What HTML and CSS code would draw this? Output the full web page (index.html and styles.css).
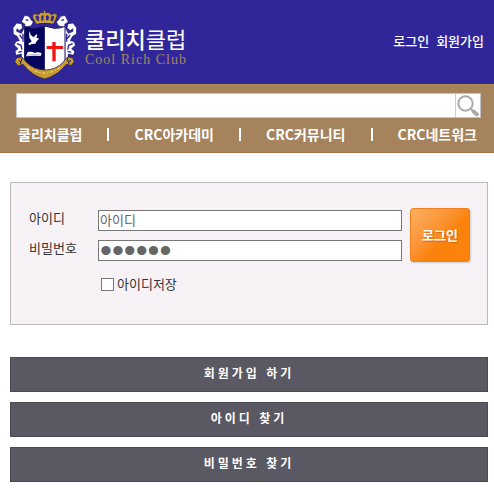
FILE: index.html
```html
<!DOCTYPE html>
<html lang="ko">
<head>
    <meta charset="UTF-8">
    <meta name="viewport" content="width=device-width, initial-scale=1.0">
    <title>쿨리치클럽</title>
    <link rel="stylesheet" href="styles.css">
</head>
<body>
    <header class="header">
        <a class="logo" href="#">
            <svg class="emblem" viewBox="24 18 192 222" aria-hidden="true">
                <!-- lions -->
                <g id="lion">
                    <path fill="#fff" stroke="#17175f" stroke-width="2" d="M58 38 Q73 36 78 50 L85 57 L78 69 L66 71 L60 92 L60 170 L50 172 L49 153 L33 157 L30 145 L39 137 L27 126 L33 115 L43 113 L36 100 L25 94 L24 74 L35 60 L50 62 L53 75 L43 83 L36 77 L35 85 L49 91 L56 78 L60 64 L49 57 Z"/>
                    <path fill="none" stroke="#30269a" stroke-width="4" d="M62 50 L70 52 M44 96 L52 107 M36 122 L48 127 L51 140 M54 92 L54 116 M40 148 L51 145"/>
                </g>
                <use href="#lion" transform="matrix(-1 0 0 1 239 0)"/>
                <!-- shield -->
                <path fill="#fff" d="M119 69 L148 76 Q165 76 180 70 L180 170 Q176 201 119 218 Z"/>
                <path fill="#05055c" d="M119 69 L92 76 Q75 76 59 70 L59 170 Q64 201 119 218 Z"/>
                <path fill="none" stroke="#17175f" stroke-width="3" d="M59 70 Q75 78 92 76 L119 69 L148 76 Q165 77 180 70 L180 170 Q176 201 119 218 Q64 201 59 170 Z"/>
                <path fill="#f51313" d="M142 117 H152 V129 H174 V138 H152 V175 H142 V138 H125 V129 H142 Z"/>
                <path fill="#fff" d="M72 84 L78 97 L86 103 L94 94 L97 96 L94 104 L103 107 L96 113 L91 122 L80 123 L73 127 L70 122 L80 115 L73 104 Z"/>
                <path fill="#fff" d="M68 147 Q82 144 89 150 Q99 145 110 151 L107 159 L88 158 L63 160 Z"/>
                <path fill="none" stroke="#999abf" stroke-width="2" d="M64 157 L88 154 L107 156"/>
                <!-- crown -->
                <path fill="#c79a2b" stroke="#17175f" stroke-width="2" d="M93 63 L83 44 Q80 32 93 32 L100 35 Q106 25 115 29 L115 22 H122 V29 Q133 24 139 35 Q154 27 157 39 L146 63 Q119 57 93 63 Z"/>
                <path fill="#30269a" d="M91 41 Q96 34 102 42 L102 53 L97 54 Z M109 40 Q114 33 116 40 L115 52 L109 53 Z M123 39 Q129 34 132 42 L130 52 L123 52 Z M138 42 Q146 34 148 43 L143 55 L137 53 Z"/>
                <path fill="none" stroke="#f5d982" stroke-width="3" stroke-dasharray="4 4" d="M96 61 Q119 54 143 61"/>
                <!-- ribbon -->
                <path fill="#c79a2b" stroke="#17175f" stroke-width="2" d="M35 164 L51 162 L63 176 Q84 199 119 201 Q154 200 174 178 L187 162 L203 164 L208 176 L198 188 L184 184 Q160 217 119 228 Q79 218 54 184 L39 189 L29 176 Z"/>
                <path fill="none" stroke="#f0dc98" stroke-width="3" stroke-dasharray="10 5 4 5" d="M68 190 Q117 230 169 191"/>
                <path fill="none" stroke="#17175f" stroke-width="3" d="M42 172 L48 178 M52 164 L45 184 M190 177 L198 172 M186 165 L193 185"/>
            </svg>
            <span class="logo-text">
                <span class="logo-name"><strong>쿨리치</strong>클럽</span>
                <span class="logo-sub">Cool Rich Club</span>
            </span>
        </a>
        <div class="user-menu">
            <a href="#">로그인</a>
            <a href="#">회원가입</a>
        </div>
    </header>

    <div class="topbar">
        <form class="search">
            <input class="search-input" type="text" aria-label="검색">
            <button class="search-btn" type="submit" aria-label="검색">
                <svg viewBox="0 0 24 24" width="24" height="24" aria-hidden="true">
                    <circle cx="9.5" cy="9.5" r="7.2" fill="none" stroke="#aaa" stroke-width="2"/>
                    <path d="M14.5 14.5 L17 17" stroke="#aaa" stroke-width="2"/>
                    <path d="M17.5 17.5 L21 20.5" stroke="#aaa" stroke-width="4" stroke-linecap="round"/>
                </svg>
            </button>
        </form>
        <nav class="nav">
            <a href="#">쿨리치클럽</a>
            <span class="divider"></span>
            <a href="#">CRC아카데미</a>
            <span class="divider"></span>
            <a href="#">CRC커뮤니티</a>
            <span class="divider"></span>
            <a href="#">CRC네트워크</a>
        </nav>
    </div>

    <main class="content">
        <form class="login-box">
            <div class="fields">
                <label for="userId">아이디</label>
                <input class="field" type="text" id="userId" placeholder="아이디">
                <label for="userPw">비밀번호</label>
                <input class="field password" type="password" id="userPw" value="123456">
                <div class="save-id">
                    <input type="checkbox" id="saveId">
                    <label for="saveId">아이디저장</label>
                </div>
            </div>
            <button class="login-btn" type="submit">로그인</button>
        </form>

        <div class="links">
            <button class="link-btn" type="button">회원가입 하기</button>
            <button class="link-btn" type="button">아이디 찾기</button>
            <button class="link-btn" type="button">비밀번호 찾기</button>
        </div>
    </main>
</body>
</html>
```
FILE: styles.css
```css
* {
    box-sizing: border-box;
}
body {
    margin: 0;
    background: #fff;
    color: #333;
    font-family: "Noto Sans CJK KR", sans-serif;
    font-size: 13px;
    line-height: 20px;
}
a {
    color: inherit;
    text-decoration: none;
}
input, button {
    font-family: inherit;
    font-size: 13px;
    margin: 0;
}
.header {
    display: flex;
    justify-content: space-between;
    align-items: center;
    height: 84px;
    padding: 0 10px 0 13px;
    background: #30269a;
    color: #fff;
}
.logo {
    display: flex;
    align-items: center;
    gap: 8px;
    padding-top: 8px;
}
.emblem {
    width: 64px;
    height: 74px;
}
.logo-text {
    display: flex;
    flex-direction: column;
}
.logo-name {
    font-size: 22px;
    line-height: 28px;
}
.logo-name strong {
    font-weight: 500;
}
.logo-sub {
    color: #a5835d;
    font-family: "Liberation Serif", serif;
    font-size: 14px;
    line-height: 16px;
    letter-spacing: 1px;
}
.user-menu {
    display: flex;
    gap: 7px;
    padding-bottom: 2px;
    font-weight: 500;
}
.topbar {
    padding: 8px 13px 8px 16px;
    background: #a5835d;
    border-top: 1px solid #b0894d;
    border-bottom: 1px solid #a07445;
}
.search {
    display: flex;
    height: 25px;
    border: 1px solid #c4c4c8;
    background: #fff;
}
.search-input {
    flex: 1;
    min-width: 0;
    border: none;
    padding: 0 6px;
    outline: none;
}
.search-btn {
    width: 25px;
    padding: 0;
    border: none;
    border-left: 1px solid #ccc;
    background: #fff;
    cursor: pointer;
}
.search-btn svg {
    display: block;
}
.nav {
    display: flex;
    justify-content: space-between;
    align-items: center;
    padding: 6px 4px 0 2px;
    color: #fff;
    font-size: 14px;
    font-weight: bold;
}
.divider {
    width: 2px;
    height: 13px;
    background: #fff;
}
.content {
    padding: 29px 6px 12px 10px;
}
.login-box {
    display: flex;
    align-items: flex-start;
    gap: 8px;
    padding: 25px 17px 30px 18px;
    border: 1px solid #bbb;
    background: #f6f2f6;
}
.fields {
    flex: 1;
    display: grid;
    grid-template-columns: 69px 1fr;
    row-gap: 9px;
    padding-top: 2px;
}
.fields > label {
    line-height: 16px;
}
.field {
    width: 100%;
    height: 21px;
    padding: 0 1px 2px;
    border: 1px solid #777;
    border-radius: 0;
    background: #fff;
    color: #666;
}
.field::placeholder {
    color: #666;
}
/* big round bullets */
.password {
    padding: 0 1px;
    font-family: "Liberation Sans", sans-serif;
    font-size: 34px;
    line-height: 19px;
}
.save-id {
    grid-column: 2;
    display: flex;
    align-items: center;
    gap: 3px;
    padding: 4px 0 0 3px;
}
.save-id input {
    appearance: none;
    width: 13px;
    height: 13px;
    border: 1px solid #777;
    background: #fff;
}
.save-id input:checked {
    background: #666;
}
.login-btn {
    width: 60px;
    height: 54px;
    padding: 0 0 2px;
    border: 1px solid #f08020;
    border-radius: 3px;
    background: linear-gradient(135deg, #fbb064, #fb9333 40%, #fb820c 60%);
    box-shadow: 1px 1px 2px #ccc;
    color: #fff;
    font-weight: bold;
    text-shadow: 1px 1px 1px #c66510;
    cursor: pointer;
}
.links {
    display: flex;
    flex-direction: column;
    gap: 10px;
    margin-top: 32px;
}
.link-btn {
    height: 35px;
    padding: 0 0 5px;
    border: 1px solid #4b4858;
    background: #5a5862;
    color: #fff;
    font-size: 12px;
    font-weight: bold;
    letter-spacing: 3px;
    cursor: pointer;
}
```
